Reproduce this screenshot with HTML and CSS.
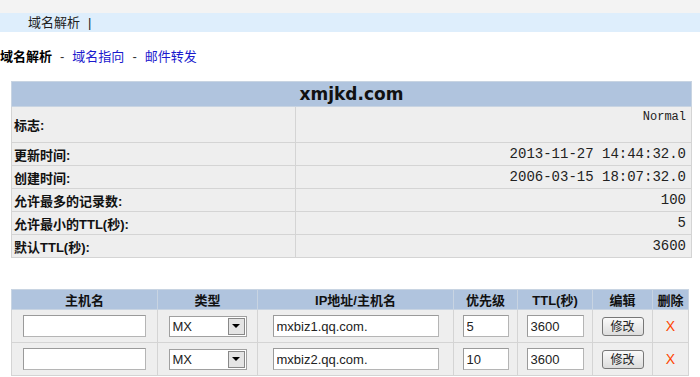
FILE: index.html
```html
<!DOCTYPE html>
<html>
	<head>
		<title>域名解析</title>
		<link rel="stylesheet" href="styles.css">
	</head>
	<body>
		<div id="topstrip"></div>
		<div id="nav"><span>域名解析</span><span class="sep">|</span></div>
		<p id="crumbs"><b>域名解析</b><span class="dash">-</span><a href="#">域名指向</a><span class="dash">-</span><a href="#">邮件转发</a></p>

		<table id="info">
			<colgroup><col class="c-label"><col class="c-val"></colgroup>
			<tr><th colspan="2">xmjkd.com</th></tr>
			<tr class="tall"><td class="label">标志:</td><td class="val top">Normal</td></tr>
			<tr><td class="label">更新时间:</td><td class="val">2013-11-27 14:44:32.0</td></tr>
			<tr><td class="label">创建时间:</td><td class="val">2006-03-15 18:07:32.0</td></tr>
			<tr><td class="label">允许最多的记录数:</td><td class="val">100</td></tr>
			<tr><td class="label">允许最小的TTL(秒):</td><td class="val">5</td></tr>
			<tr><td class="label">默认TTL(秒):</td><td class="val">3600</td></tr>
		</table>

		<table id="records">
			<colgroup>
				<col class="c-host"><col class="c-type"><col class="c-ip"><col class="c-pri">
				<col class="c-ttl"><col class="c-edit"><col class="c-del">
			</colgroup>
			<tr>
				<th>主机名</th>
				<th>类型</th>
				<th>IP地址/主机名</th>
				<th>优先级</th>
				<th>TTL(秒)</th>
				<th>编辑</th>
				<th>删除</th>
			</tr>
			<tr>
				<td><input class="in-host" type="text" value=""></td>
				<td><div class="fsel"><span class="fsel-text">MX</span><span class="fsel-btn"><i></i></span></div></td>
				<td><input class="in-ip" type="text" value="mxbiz1.qq.com."></td>
				<td><input class="in-pri" type="text" value="5"></td>
				<td><input class="in-ttl" type="text" value="3600"></td>
				<td><button class="btn">修改</button></td>
				<td><a class="del" href="#">X</a></td>
			</tr>
			<tr>
				<td><input class="in-host" type="text" value=""></td>
				<td><div class="fsel"><span class="fsel-text">MX</span><span class="fsel-btn"><i></i></span></div></td>
				<td><input class="in-ip" type="text" value="mxbiz2.qq.com."></td>
				<td><input class="in-pri" type="text" value="10"></td>
				<td><input class="in-ttl" type="text" value="3600"></td>
				<td><button class="btn">修改</button></td>
				<td><a class="del" href="#">X</a></td>
			</tr>
		</table>
	</body>
</html>
```

FILE: styles.css
```css
body {
	margin:0;
	font-size:13px;
	color:#111;
	font-family:"Liberation Sans", "Noto Sans CJK SC", sans-serif;
	background:#fff;
}
#topstrip {
	height:13px;
	background:#f3f3f3;
}
#nav {
	height:19px;
	line-height:19px;
	background:#deeefc;
	padding-left:28px;
	color:#222;
}
#nav .sep {
	margin-left:8px;
}
#crumbs {
	margin:17px 0 16px 0;
	line-height:16px;
}
#crumbs b {
	color:#000;
}
#crumbs .dash {
	margin:0 8px;
	color:#333;
}
#crumbs a {
	color:#1a1acd;
	text-decoration:none;
}
table {
	border-collapse:collapse;
	margin-left:11px;
	table-layout:fixed;
}
td,
th {
	border:1px solid #d4d4d4;
	background:#eeeeee;
	padding:0;
}
th {
	background:#b0c4de;
	border-color:#c8d4e2;
}
#info {
	width:680px;
}
.c-label { width:284px; }
.c-val { width:396px; }
#info th {
	height:24px;
	font-family:"DejaVu Sans", sans-serif;
	font-size:17px;
	font-weight:bold;
	color:#111;
}
#info td {
	height:22px;
}
#info tr.tall td {
	height:32px;
}
#info td.label {
	font-weight:bold;
	padding-left:2px;
}
#info td.val {
	text-align:right;
	padding-right:5px;
	font-family:"Liberation Mono", monospace;
	font-size:14px;
	color:#222;
}
#info td.top {
	vertical-align:top;
	padding-top:3px;
	font-size:12px;
}
#records {
	width:677px;
	margin-top:31px;
}
#records th {
	height:19px;
	font-weight:bold;
	font-size:13px;
}
#records td {
	height:32px;
	text-align:center;
}
.c-host { width:146px; }
.c-type { width:100px; }
.c-ip { width:196px; }
.c-pri { width:64px; }
.c-ttl { width:75px; }
.c-edit { width:60px; }
.c-del { width:36px; }
input {
	box-sizing:border-box;
	height:22px;
	border:1px solid #b5b5b5;
	border-top-color:#9a9a9a;
	border-left-color:#9a9a9a;
	background:#fff;
	font-family:"Liberation Sans", sans-serif;
	font-size:13px;
	padding:0 3px;
	margin:0;
	color:#222;
}
.in-host { width:123px; }
.in-ip { width:166px; }
.in-pri { width:46px; }
.in-ttl { width:57px; }
.fsel {
	box-sizing:border-box;
	display:inline-flex;
	align-items:center;
	justify-content:space-between;
	width:78px;
	height:21px;
	border:1px solid #a0a0a0;
	background:#fff;
	vertical-align:middle;
}
.fsel-text {
	padding-left:3px;
	font-size:13px;
	color:#222;
}
.fsel-btn {
	box-sizing:border-box;
	width:17px;
	height:17px;
	margin-right:1px;
	border:1px solid #888;
	background:#e4e4e4;
	display:flex;
	align-items:center;
	justify-content:center;
}
.fsel-btn i {
	width:0;
	height:0;
	border-left:4px solid transparent;
	border-right:4px solid transparent;
	border-top:4px solid #000;
}
.btn {
	box-sizing:border-box;
	width:42px;
	height:19px;
	padding:0;
	border:1px solid #777;
	border-radius:3px;
	background:linear-gradient(#fafafa, #dcdcdc);
	font-family:"Noto Sans CJK SC", sans-serif;
	font-size:12px;
	line-height:16px;
	color:#222;
}
.del {
	color:#ff4500;
	text-decoration:none;
	font-size:14px;
}
```
